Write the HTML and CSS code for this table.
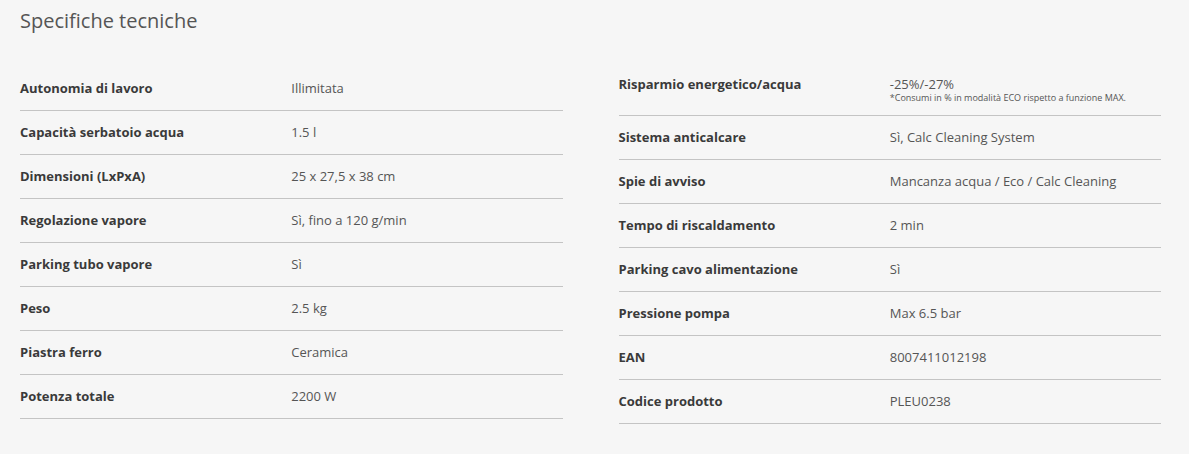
FILE: index.html
```html
<!DOCTYPE html>
<html lang="it">
<head>
<meta charset="utf-8">
<title>Specifiche tecniche</title>
<link rel="stylesheet" href="styles.css">
</head>
<body>
<section class="specs">
  <h2 class="specs-title">Specifiche tecniche</h2>
  <div class="specs-grid">
    <dl class="spec-table">
      <div class="spec-row"><dt>Autonomia di lavoro</dt><dd>Illimitata</dd></div>
      <div class="spec-row"><dt>Capacità serbatoio acqua</dt><dd>1.5 l</dd></div>
      <div class="spec-row"><dt>Dimensioni (LxPxA)</dt><dd>25 x 27,5 x 38 cm</dd></div>
      <div class="spec-row"><dt>Regolazione vapore</dt><dd>Sì, fino a 120 g/min</dd></div>
      <div class="spec-row"><dt>Parking tubo vapore</dt><dd>Sì</dd></div>
      <div class="spec-row"><dt>Peso</dt><dd>2.5 kg</dd></div>
      <div class="spec-row"><dt>Piastra ferro</dt><dd>Ceramica</dd></div>
      <div class="spec-row"><dt>Potenza totale</dt><dd>2200 W</dd></div>
    </dl>
    <dl class="spec-table">
      <div class="spec-row spec-row--note"><dt>Risparmio energetico/acqua</dt><dd><span class="spec-main">-25%/-27%</span><small class="spec-note">*Consumi in % in modalità ECO rispetto a funzione MAX.</small></dd></div>
      <div class="spec-row"><dt>Sistema anticalcare</dt><dd>Sì, Calc Cleaning System</dd></div>
      <div class="spec-row"><dt>Spie di avviso</dt><dd>Mancanza acqua / Eco / Calc Cleaning</dd></div>
      <div class="spec-row"><dt>Tempo di riscaldamento</dt><dd>2 min</dd></div>
      <div class="spec-row"><dt>Parking cavo alimentazione</dt><dd>Sì</dd></div>
      <div class="spec-row"><dt>Pressione pompa</dt><dd>Max 6.5 bar</dd></div>
      <div class="spec-row"><dt>EAN</dt><dd>8007411012198</dd></div>
      <div class="spec-row"><dt>Codice prodotto</dt><dd>PLEU0238</dd></div>
    </dl>
  </div>
</section>
</body>
</html>
```

FILE: styles.css
```css
* { box-sizing: border-box; }
html, body { margin: 0; padding: 0; background: #ffffff; }
body { font-family: "Open Sans", "Liberation Sans", sans-serif; }

.specs {
  background: #f6f6f6;
  height: 454px;
  padding: 6px 28px 0 20px;
}

.specs-title {
  margin: 0;
  font-size: 20px;
  font-weight: 400;
  line-height: 30px;
  color: #555555;
  height: 61px;
}

.specs-grid {
  display: grid;
  grid-template-columns: 1fr 1fr;
  column-gap: 56px;
}

.spec-table { margin: 0; }

.spec-row {
  display: grid;
  grid-template-columns: 1fr 1fr;
  align-items: baseline;
  padding: 12px 0 13px;
  border-bottom: 1px solid #c4c4c4;
  height: 44px;
}

.spec-row dt {
  font-size: 13px;
  font-weight: 700;
  line-height: 18px;
  color: #3a3a3a;
}

.spec-row dd {
  margin: 0;
  font-size: 13px;
  font-weight: 400;
  line-height: 18px;
  color: #555555;
}

.spec-row--note {
  height: 49px;
  padding: 8px 0 0;
}

.spec-main { display: block; line-height: 18px; }
.spec-note {
  display: block;
  font-size: 9px;
  line-height: 10px;
  white-space: nowrap;
}
```
